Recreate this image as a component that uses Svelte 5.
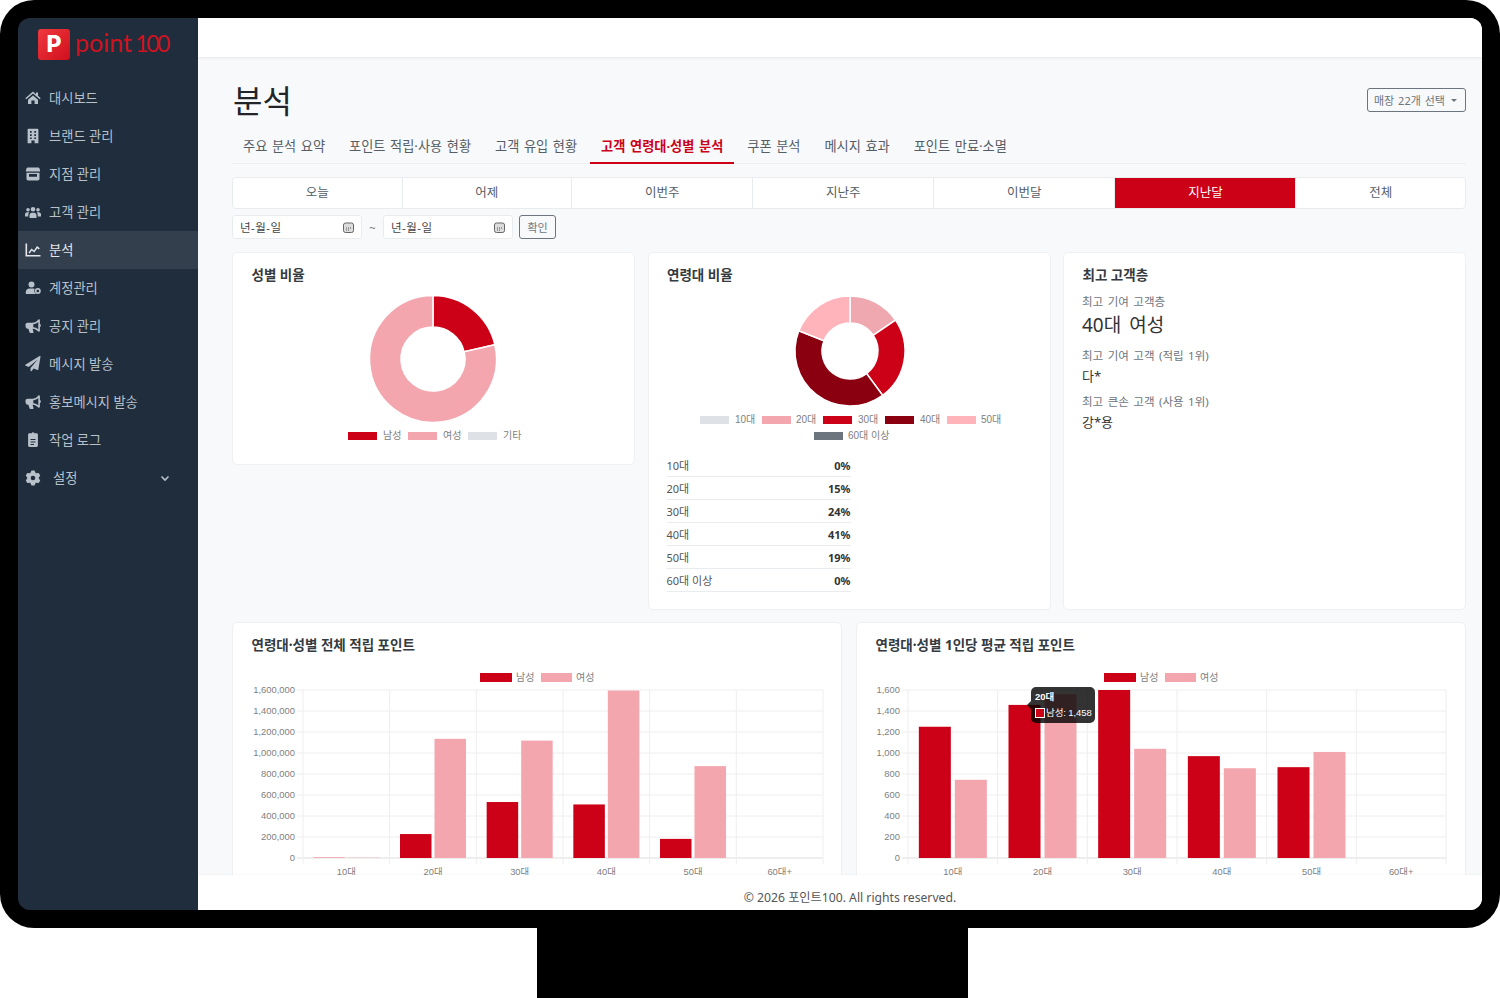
<script>
  const menu = [
    { label: "대시보드", icon: "home" },
    { label: "브랜드 관리", icon: "building" },
    { label: "지점 관리", icon: "store" },
    { label: "고객 관리", icon: "users" },
    { label: "분석", icon: "chart", active: true },
    { label: "계정관리", icon: "account" },
    { label: "공지 관리", icon: "horn" },
    { label: "메시지 발송", icon: "plane" },
    { label: "홍보메시지 발송", icon: "horn" },
    { label: "작업 로그", icon: "clip" },
    { label: "설정", icon: "cog", more: true },
  ];

  const icons = {
    home: "M8 1.5.3 8.2l1 1.1L8 3.5l6.7 5.8 1-1.1-2.7-2.4V2.4h-2v1.8L8 1.5zM3 9.8l5-4.4 5 4.4V14H9.6v-3.4H6.4V14H3V9.8z",
    building: "M3.6 .8h8.8c.6 0 1 .4 1 1V15.2H9.6v-2.8H6.4v2.8H2.6V1.8c0-.6.4-1 1-1zM5 3v1.7h1.7V3H5zm4.3 0v1.7H11V3H9.3zM5 6.2v1.7h1.7V6.2H5zm4.3 0v1.7H11V6.2H9.3zM5 9.4v1.7h1.7V9.4H5zm4.3 0v1.7H11V9.4H9.3z",
    store: "M3 1.5h10c.8 0 1.5.6 1.7 1.4l.5 2.6H.8l.5-2.6C1.5 2.100 2.200 1.500 3 1.500zM1.500 6.800h13v6c0 1-.7 1.700-1.700 1.700H3.200c-1 0-1.700-.7-1.700-1.700v-6zM4 8v2.800h8V8H4z",
    users: "M8 3a2.300 2.300 0 1 1 0 4.600A2.300 2.300 0 0 1 8 3zM3 4a1.800 1.800 0 1 1 0 3.600A1.800 1.800 0 0 1 3 4zm10 0a1.800 1.800 0 1 1 0 3.600A1.800 1.800 0 0 1 13 4zM0 12.500v-2c0-1.200 1-2.200 2-2.200h1.600c.3 0 .5.100.7.200-.6.600-1 1.400-1 2.300v1.700H0zm4.500 1.500v-2.700c0-1.300 1-2.500 2.300-2.500h2.400c1.300 0 2.300 1.200 2.300 2.500V14h-7zm11.500-1.500v-2c0-1.200-1-2.200-2-2.200h-1.600c-.3 0-.5.100-.7.200.6.600 1 1.400 1 2.300v1.700H16z",
    chart: "M.5 1.500h1.600v11.400h13.400v1.600H.5V1.500zM3.500 10.500l3-4 2.500 2 3-4.500 2.800 2.300-1 1.200-1.500-1.200L9.300 10.500 6.800 8.600 4.700 11.400l-1.200-.9z",
    account: "M6.500 1.500a3 3 0 1 1 0 6 3 3 0 0 1 0-6zM.8 14v-1.800c0-2 1.600-3.600 3.600-3.600h3.800c.6 0 1 .1 1.500.3-.3.500-.5 1.100-.5 1.700 0 1.500.7 2.700 1.700 3.400H.8zm12-6a3 3 0 1 1 0 6 3 3 0 0 1 0-6zm0 1.700a1.300 1.300 0 1 0 0 2.600 1.300 1.300 0 0 0 0-2.600z",
    horn: "M14 1.200c.5 0 .9.400.9.900v4c.6.200 1 .7 1 1.400s-.4 1.200-1 1.400v3.900c0 .5-.4.900-.9.900-.2 0-.4-.1-.6-.2-1.800-1.500-3.500-2.500-5.800-2.700l.9 3.400c.1.400-.2.700-.5.700H5.200c-.3 0-.5-.2-.6-.4l-1.200-3.700H2.600C1.400 10.300.5 9.400.5 8.200V6.800c0-1.200.9-2.100 2.100-2.100h4.600c2.500 0 4.300-1.100 6.200-3.300.2-.1.400-.2.600-.2zM13.300 3.900c-1.600 1.400-3.200 2.100-5 2.300v3c1.800.1 3.400.800 5 2V3.900z",
    plane: "M15.500.7 13.300 13.500c-.1.500-.6.700-1 .5L8.700 12.500l-2.100 2.600c-.4.500-1.100.2-1.100-.4V12L12.800 3.500 3.700 11 .7 9.800c-.6-.2-.6-1 0-1.300L14.600 0c.5-.3 1 .2.900.7z",
    clip: "M6.600 1.200a1.500 1.500 0 0 1 2.800 0h2.100c.8 0 1.400.6 1.400 1.400v11c0 .8-.6 1.400-1.400 1.400h-7c-.8 0-1.400-.6-1.400-1.400v-11c0-.8.600-1.400 1.400-1.400h2.100zM5.500 7v.9h5V7h-5zm0 2.500v.9h5v-.9h-5zm0 2.500v.9h3.500V12H5.500z",
    cog: gear(),
  };

  // 6 lobe gear with a hole, same proportions as the settings icon
  function gear() {
    const pts = [];
    for (let i = 0; i < 6; i++) {
      const a = (i * Math.PI) / 3 - Math.PI / 2;
      for (const [r, da] of [[5.6, -0.52], [7.6, -0.2], [7.6, 0.2], [5.6, 0.52]]) {
        pts.push(`${(8 + r * Math.cos(a + da)).toFixed(2)} ${(8 + r * Math.sin(a + da)).toFixed(2)}`);
      }
    }
    return `M${pts.join("L")}zM8 5.700a2.300 2.300 0 1 0 0 4.600 2.300 2.300 0 0 0 0-4.600z`;
  }

  const tabs = ["주요 분석 요약", "포인트 적립·사용 현황", "고객 유입 현황", "고객 연령대·성별 분석", "쿠폰 분석", "메시지 효과", "포인트 만료·소멸"];
  const periods = ["오늘", "어제", "이번주", "지난주", "이번달", "지난달", "전체"];

  const red = "#cc0017";
  const pink = "#f4a6ae";

  function arc(cx, cy, r, ir, from, to) {
    const pt = (rad, t) => {
      const a = t * 2 * Math.PI - Math.PI / 2;
      return `${(cx + rad * Math.cos(a)).toFixed(2)} ${(cy + rad * Math.sin(a)).toFixed(2)}`;
    };
    const large = to - from > 0.5 ? 1 : 0;
    return `M${pt(r, from)}A${r} ${r} 0 ${large} 1 ${pt(r, to)}L${pt(ir, to)}A${ir} ${ir} 0 ${large} 0 ${pt(ir, from)}z`;
  }

  function slices(items) {
    let sum = 0;
    return items.map((s) => {
      const from = sum;
      sum += s.v;
      return { color: s.color, from, to: sum };
    });
  }

  const genderSlices = slices([
    { v: 0.214, color: red },
    { v: 0.786, color: pink },
  ]);
  const ageSlices = slices([
    { v: 0.155, color: "#f0a8b0" },
    { v: 0.244, color: red },
    { v: 0.411, color: "#8b0010" },
    { v: 0.19, color: "#ffb3ba" },
  ]);

  const genderLegend = [
    { x: 116, tx: 151, label: "남성", color: red },
    { x: 176, tx: 211, label: "여성", color: pink },
    { x: 236, tx: 271, label: "기타", color: "#dee2e6" },
  ];
  const ageLegend = [
    { x: 52, tx: 87, y: 129, label: "10대", color: "#dee2e6" },
    { x: 114, tx: 148, y: 129, label: "20대", color: pink },
    { x: 175, tx: 210, y: 129, label: "30대", color: red },
    { x: 237, tx: 272, y: 129, label: "40대", color: "#8b0010" },
    { x: 299, tx: 333, y: 129, label: "50대", color: "#ffb3ba" },
    { x: 166, tx: 200, y: 145, label: "60대 이상", color: "#6c757d" },
  ];

  const ageRows = [
    ["10대", "0%"],
    ["20대", "15%"],
    ["30대", "24%"],
    ["40대", "41%"],
    ["50대", "19%"],
    ["60대 이상", "0%"],
  ];

  const ages = ["10대", "20대", "30대", "40대", "50대", "60대+"];
  const totalChart = {
    left: 71,
    right: 591,
    max: 1600000,
    bar: 31.5,
    inner: 3,
    male: [8000, 228000, 533000, 510000, 182000, 0],
    female: [3000, 1135000, 1118000, 1595000, 875000, 0],
    ticks: 8,
  };
  const avgChart = {
    left: 52,
    right: 590,
    max: 1600,
    bar: 32,
    inner: 4,
    male: [1250, 1458, 1600, 970, 865, 0],
    female: [745, 1560, 1040, 855, 1010, 0],
    ticks: 8,
  };

  const plotTop = 25;
  const plotBottom = 193;
  const plotH = plotBottom - plotTop;

  function fmt(n) {
    return n.toLocaleString("en-US");
  }
</script>

{#snippet donut(parts, cx, cy, r, ir)}
  {#each parts as s}
    <path d={arc(cx, cy, r, ir, s.from, s.to)} fill={s.color} stroke="#fff" stroke-width="1.500" />
  {/each}
{/snippet}

{#snippet barChart(c, lx)}
  <svg class="chart" width="610" height="215" viewBox="0 0 610 215">
    <rect x={lx} y="8" width="32" height="9" fill={red} />
    <text class="lg" x={lx + 36} y="16">남성</text>
    <rect x={lx + 61} y="8" width="31" height="9" fill={pink} />
    <text class="lg" x={lx + 96} y="16">여성</text>

    {#each Array(c.ticks + 1) as _, i}
      {@const y = plotBottom - (i * plotH) / c.ticks}
      <line x1={c.left - 6} x2={c.right} y1={y} y2={y} stroke={i === 0 ? "#ddd" : "#eee"} />
      <text class="tick" x={c.left - 8} y={y + 3} text-anchor="end">{fmt((i * c.max) / c.ticks)}</text>
    {/each}
    {#each Array(7) as _, i}
      {@const x = c.left + (i * (c.right - c.left)) / 6}
      <line x1={x} x2={x} y1={plotTop} y2={plotBottom + 6} stroke="#eee" />
    {/each}

    {#each ages as age, i}
      {@const cw = (c.right - c.left) / 6}
      {@const mid = c.left + cw * (i + 0.5)}
      <rect x={mid - c.inner / 2 - c.bar} y={plotBottom - (c.male[i] / c.max) * plotH} width={c.bar} height={(c.male[i] / c.max) * plotH} fill={i === 0 && c.max > 2000 ? pink : red} />
      <rect x={mid + c.inner / 2} y={plotBottom - (c.female[i] / c.max) * plotH} width={c.bar} height={(c.female[i] / c.max) * plotH} fill={pink} />
      <text class="tick" x={mid} y="210" text-anchor="middle">{age}</text>
    {/each}
  </svg>
{/snippet}

<div class="monitor">
  <div class="screen">
    <aside class="sidebar">
      <div class="brand">
        <span class="mark">P</span>
        <span class="word">point <em>100</em></span>
      </div>
      <nav>
        {#each menu as item}
          <div class="nav-item" class:active={item.active} class:more={item.more}>
            <svg class="nav-icon" width="16" height="16" viewBox="0 0 16 16"><path d={icons[item.icon]} fill="currentColor" fill-rule="evenodd" /></svg>
            <span>{item.label}</span>
            {#if item.more}
              <svg class="chev" width="10" height="10" viewBox="0 0 10 10"><path d="M1.500 3.500 5 7l3.500-3.500" fill="none" stroke="currentColor" stroke-width="1.600" /></svg>
            {/if}
          </div>
        {/each}
      </nav>
    </aside>

    <div class="main">
      <header class="topbar"></header>

      <div class="content">
        <div class="head">
          <h1>분석</h1>
          <button class="store-btn">매장 22개 선택<i class="caret"></i></button>
        </div>

        <div class="tabs">
          {#each tabs as tab, i}
            <span class="tab" class:on={i === 3}>{tab}</span>
          {/each}
        </div>

        <div class="periods">
          {#each periods as p, i}
            <span class="period" class:on={i === 5}>{p}</span>
          {/each}
        </div>

        <div class="dates">
          <div class="date">
            <span>년-월-일</span>
            <svg width="11" height="11" viewBox="0 0 11 11"><rect x=".5" y="1" width="10" height="9.500" rx="2" fill="#ddd" stroke="#666" /><path d="M3 6h1M5 6h1M7 6h1M3 8h1M5 8h1" stroke="#555" /></svg>
          </div>
          <span class="tilde">~</span>
          <div class="date">
            <span>년-월-일</span>
            <svg width="11" height="11" viewBox="0 0 11 11"><rect x=".5" y="1" width="10" height="9.500" rx="2" fill="#ddd" stroke="#666" /><path d="M3 6h1M5 6h1M7 6h1M3 8h1M5 8h1" stroke="#555" /></svg>
          </div>
          <button class="ok">확인</button>
        </div>

        <div class="row top">
          <section class="card gender">
            <h2>성별 비율</h2>
            <svg class="chart" width="403" height="177" viewBox="0 0 403 177">
              {@render donut(genderSlices, 201, 72, 63.500, 32)}
              {#each genderLegend as l}
                <rect x={l.x} y="145" width="29" height="8" fill={l.color} />
                <text class="lg" x={l.tx} y="152">{l.label}</text>
              {/each}
            </svg>
          </section>

          <section class="card">
            <h2>연령대 비율</h2>
            <svg class="chart" width="403" height="167" viewBox="0 0 403 167">
              {@render donut(ageSlices, 202, 64, 55, 28)}
              {#each ageLegend as l}
                <rect x={l.x} y={l.y} width="29" height="8" fill={l.color} />
                <text class="lg" x={l.tx} y={l.y + 7}>{l.label}</text>
              {/each}
            </svg>
            <div class="age-table">
              {#each ageRows as row}
                <div class="age-row"><span>{row[0]}</span><b>{row[1]}</b></div>
              {/each}
            </div>
          </section>

          <section class="card">
            <h2>최고 고객층</h2>
            <div class="stats">
              <p class="cap">최고 기여 고객층</p>
              <p class="big">40대 여성</p>
              <p class="cap">최고 기여 고객 (적립 1위)</p>
              <p class="val">다*</p>
              <p class="cap">최고 큰손 고객 (사용 1위)</p>
              <p class="val">강*용</p>
            </div>
          </section>
        </div>

        <div class="row bottom">
          <section class="card tall">
            <h2>연령대·성별 전체 적립 포인트</h2>
            {@render barChart(totalChart, 248)}
          </section>
          <section class="card tall">
            <h2>연령대·성별 1인당 평균 적립 포인트</h2>
            <div class="tip-wrap">
              {@render barChart(avgChart, 248)}
              <div class="tooltip">
                <b>20대</b>
                <span class="tip-line"><i class="tip-swatch"></i>남성: 1,458</span>
              </div>
            </div>
          </section>
        </div>
      </div>

      <footer class="footer">© 2026 포인트100. All rights reserved.</footer>
    </div>
  </div>
</div>
<div class="stand"></div>

<style>
  :global(body) {
    margin: 0;
    background: #fff;
    font-family: "Noto Sans", "Noto Sans CJK KR", sans-serif;
  }

  .monitor {
    width: 1500px;
    height: 928px;
    box-sizing: border-box;
    padding: 18px;
    background: #000;
    border-radius: 34px;
  }

  .stand {
    width: 431px;
    height: 70px;
    margin-left: 537px;
    background: #000;
  }

  .screen {
    display: flex;
    height: 100%;
    border-radius: 12px;
    overflow: hidden;
  }

  .sidebar {
    width: 180px;
    flex: none;
    background: #1f2d3d;
    color: #b8c0ca;
  }

  .brand {
    display: flex;
    align-items: center;
    gap: 5px;
    height: 61px;
    padding: 0 0 9px 20px;
    box-sizing: border-box;
  }

  .mark {
    width: 32px;
    height: 31px;
    border-radius: 3px;
    background: linear-gradient(135deg, #f0393f, #cf0f1c);
    color: #fff;
    font: 800 23px/31px Inter, sans-serif;
    text-align: center;
  }

  .word {
    margin-top: -3px;
    color: #cf1220;
    font: 400 25px/1 Lato, sans-serif;
    word-spacing: -3px;
    white-space: nowrap;
  }

  .word em {
    font-style: normal;
    font-size: 23px;
    letter-spacing: -2.500px;
  }

  .nav-item {
    display: flex;
    align-items: center;
    gap: 8px;
    height: 38px;
    padding: 0 0 1px 7px;
    box-sizing: border-box;
    font-size: 13.250px;
  }

  .nav-item.active {
    background: #343f4e;
    color: #e4e7eb;
  }

  .nav-item.more {
    gap: 12px;
  }

  .nav-icon {
    flex: none;
  }

  .chev {
    margin-left: 71px;
  }

  .main {
    flex: 1;
    min-width: 0;
    display: flex;
    flex-direction: column;
    background: #f8f9fb;
  }

  .topbar {
    height: 39px;
    flex: none;
    background: #fff;
    box-shadow: 0 1px 3px rgba(0, 0, 0, 0.08);
  }

  .content {
    flex: 1;
    min-height: 0;
    overflow: hidden;
    padding: 0 16px 0 34px;
  }

  .head {
    display: flex;
    justify-content: space-between;
    align-items: center;
    height: 68px;
    padding: 19px 0 0 1px;
    box-sizing: border-box;
  }

  h1 {
    margin: 0;
    font-size: 32px;
    font-weight: 400;
    line-height: 1;
    color: #212529;
  }

  .store-btn {
    display: flex;
    align-items: center;
    height: 24px;
    width: 99px;
    margin-top: -1px;
    padding: 0 0 0 6px;
    box-sizing: border-box;
    background: transparent;
    border: 1px solid #6c757d;
    border-radius: 3px;
    color: #6c757d;
    font: 11px "Noto Sans", "Noto Sans CJK KR", sans-serif;
    word-spacing: 1px;
    white-space: nowrap;
  }

  .caret {
    margin-left: 6px;
    border: 3px solid transparent;
    border-top-color: #6c757d;
    border-bottom: 0;
  }

  .tabs {
    display: flex;
    gap: 2px;
    height: 38px;
    margin-top: 1px;
    border-bottom: 1px solid #eceef0;
    box-sizing: border-box;
  }

  .tab {
    padding: 0 11px;
    font-size: 13.200px;
    word-spacing: 1.200px;
    line-height: 40px;
    color: #555d65;
    white-space: nowrap;
    height: 38px;
    box-sizing: border-box;
  }

  .tab.on {
    color: #cc0017;
    font-weight: 700;
    border-bottom: 2px solid #cc0017;
  }

  .periods {
    display: flex;
    height: 32px;
    margin-top: 13px;
    background: #fff;
    border: 1px solid #e9ecef;
    border-radius: 4px;
    box-sizing: border-box;
    overflow: hidden;
  }

  .period {
    flex: 1 1 auto;
    text-align: center;
    padding: 0 70px;
    font-size: 12.500px;
    line-height: 30px;
    color: #555d65;
    border-right: 1px solid #e9ecef;
  }

  .period:last-child {
    border-right: 0;
  }

  .period.on {
    background: #cc0017;
    color: #fff;
    margin: -1px 0;
    line-height: 32px;
  }

  .dates {
    display: flex;
    align-items: center;
    height: 24px;
    margin-top: 6px;
  }

  .date {
    display: flex;
    align-items: center;
    justify-content: space-between;
    width: 130px;
    height: 24px;
    padding: 0 7px 0 7px;
    box-sizing: border-box;
    background: #fff;
    border: 1px solid #e9ecef;
    border-radius: 3px;
    font-size: 11.500px;
    letter-spacing: 0.500px;
    color: #444;
  }

  .tilde {
    width: 21px;
    text-align: center;
    font-size: 11px;
    color: #777;
  }

  .ok {
    width: 37px;
    height: 24px;
    margin-left: 6px;
    padding: 0;
    background: transparent;
    border: 1px solid #6c757d;
    border-radius: 3px;
    color: #6c757d;
    font: 11px "Noto Sans", "Noto Sans CJK KR", sans-serif;
  }

  .row {
    display: grid;
    gap: 12px;
    align-items: start;
  }

  .row.top {
    grid-template-columns: 403px 403px 403px;
    margin-top: 13px;
    height: 358px;
    align-items: stretch;
    column-gap: 12.500px;
  }

  .row.bottom {
    grid-template-columns: 610px 610px;
    margin-top: 12px;
    column-gap: 14px;
  }

  .card {
    background: #fff;
    border: 1px solid #eef0f3;
    border-radius: 5px;
    box-sizing: border-box;
  }

  .card.gender {
    align-self: start;
    height: 213px;
  }

  .card.tall {
    height: 280px;
  }

  h2 {
    margin: 0;
    height: 34px;
    padding: 13px 18.500px 0;
    box-sizing: border-box;
    font-size: 13.500px;
    line-height: 19px;
    font-weight: 700;
    color: #343a40;
    white-space: nowrap;
  }

  .tall h2 {
    height: 42px;
  }

  .chart {
    display: block;
    margin-left: -1px;
  }

  .lg,
  .tick {
    font-family: "Liberation Sans", "Noto Sans CJK KR", sans-serif;
    font-size: 10px;
    fill: #808080;
  }

  .tick {
    font-size: 9.400px;
  }

  .age-table {
    width: 184px;
    margin-left: 18px;
  }

  .age-row {
    display: flex;
    justify-content: space-between;
    align-items: center;
    height: 23px;
    box-sizing: border-box;
    border-bottom: 1px solid #e9ecef;
    font-size: 11px;
    color: #555;
  }

  .age-row b {
    color: #333;
  }

  .stats {
    padding: 7px 18px 0;
  }

  .stats p {
    margin: 0;
  }

  .cap {
    font-size: 11.500px;
    word-spacing: 1.500px;
    line-height: 16px;
    color: #6c757d;
  }

  .big {
    font-size: 19px;
    word-spacing: 3px;
    line-height: 28px;
    color: #333;
    margin-bottom: 9px !important;
    margin-top: 1px !important;
  }

  .val {
    font-size: 13px;
    line-height: 22px;
    color: #333;
    margin-bottom: 7px !important;
    margin-top: 1px !important;
  }

  .tip-wrap {
    position: relative;
  }

  .tooltip {
    position: absolute;
    left: 174px;
    top: 22px;
    width: 64px;
    height: 36px;
    box-sizing: border-box;
    padding: 3px 4px;
    background: rgba(0, 0, 0, 0.8);
    border-radius: 5px;
    color: #fff;
    font: 9.500px/14px "Liberation Sans", "Noto Sans CJK KR", sans-serif;
    white-space: nowrap;
  }

  .tooltip::before {
    content: "";
    position: absolute;
    left: -4px;
    top: 14px;
    border: 4px solid transparent;
    border-right-color: rgba(0, 0, 0, 0.8);
    border-left: 0;
  }

  .tooltip b {
    display: block;
    line-height: 13px;
  }

  .tip-line {
    display: flex;
    align-items: center;
    gap: 1px;
    margin-top: 3px;
    letter-spacing: -0.100px;
  }

  .tip-swatch {
    width: 8px;
    height: 8px;
    background: #cc0017;
    border: 1px solid #fff;
    flex: none;
  }

  .footer {
    height: 35px;
    flex: none;
    box-sizing: border-box;
    padding: 14px 0 0 20px;
    background: #fff;
    text-align: center;
    font-size: 12.200px;
    line-height: 18px;
    color: #555;
    position: relative;
    box-shadow: 0 -1px 2px rgba(0, 0, 0, 0.03);
  }
</style>
